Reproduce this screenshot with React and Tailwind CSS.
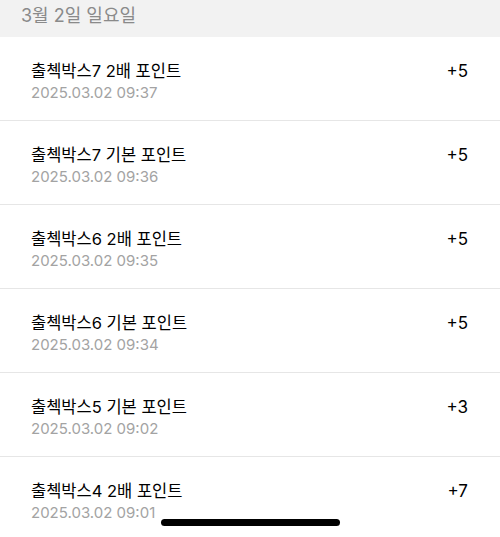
const ROWS = [
  { title: '출첵박스7 2배 포인트', time: '2025.03.02 09:37', point: '+5' },
  { title: '출첵박스7 기본 포인트', time: '2025.03.02 09:36', point: '+5' },
  { title: '출첵박스6 2배 포인트', time: '2025.03.02 09:35', point: '+5' },
  { title: '출첵박스6 기본 포인트', time: '2025.03.02 09:34', point: '+5' },
  { title: '출첵박스5 기본 포인트', time: '2025.03.02 09:02', point: '+3' },
  { title: '출첵박스4 2배 포인트', time: '2025.03.02 09:01', point: '+7' },
]

const FONT = "font-['Inter','Noto_Sans_CJK_KR',sans-serif]"

export default function App() {
  return (
    <div className={`relative w-[500px] h-[537px] overflow-hidden bg-white ${FONT}`}>
      {/* Date header */}
      <div className="h-[37px] bg-[#f2f2f2] pl-[21px] flex items-center">
        <span className="text-[18px] text-[#8a8a8a] leading-none -mt-[6px]">3월 2일 일요일</span>
      </div>

      {/* History list */}
      <ul>
        {ROWS.map((r, i) => (
          <li key={i} className="h-[84px] border-b border-[#e6e6e6] pl-[31px] pr-[32px] pt-[6px] flex flex-col justify-center">
            <div className="flex items-center justify-between">
              <span className="text-[16.5px] leading-[22px] text-black">{r.title}</span>
              <span className="text-[17px] leading-[22px] text-black">{r.point}</span>
            </div>
            <span className="text-[15px] leading-[22px] text-[#a3a3a3]">{r.time}</span>
          </li>
        ))}
      </ul>

      {/* Home indicator */}
      <div className="absolute left-[161px] top-[519px] w-[179px] h-[7px] rounded-full bg-black" />
    </div>
  )
}
